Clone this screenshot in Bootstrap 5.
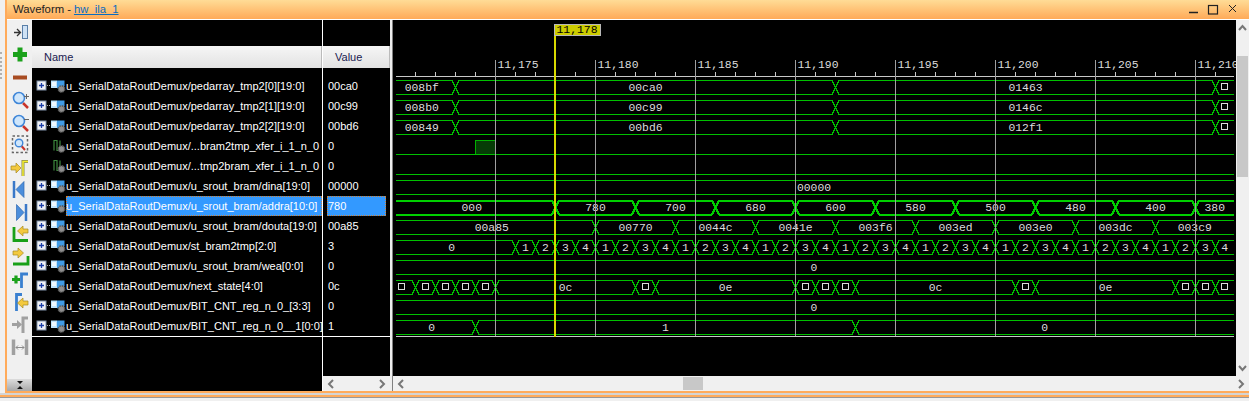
<html>
  <head>
    <link href="https://cdn.jsdelivr.net/npm/bootstrap@5.3.1/dist/css/bootstrap.min.css" rel="stylesheet" />
    <script src="https://cdn.jsdelivr.net/npm/bootstrap@5.3.1/dist/js/bootstrap.bundle.min.js"></script>
    <style>
      html, body { height: 401px; overflow: hidden; }
      body { background: #f0f0f0; font-family: "Liberation Sans", sans-serif; font-size: 11px; line-height: 1; }
      .top-part { height: 393px; }
      .grip-strip { width: 5px; }
      .grip-dots { width: 2px; height: 27px; margin-top: 52px; border-left: 2px dotted #b0b0b0; }
      .view-frame { width: 1244px; border-left: 2px solid #ffab5b; border-bottom: 2px solid #ffab5b; }
      .title-bar { height: 20px; background: linear-gradient(#ffdc96, #ffaa58); border-bottom: 1px solid #fff; padding-left: 6px; color: #222; font-size: 11.3px; }
      .title-bar a { color: #0a6cc0; margin-left: 3px; }
      .main-row { height: 371px; }
      .tool-col { width: 25px; background: #f0f0f0; padding-top: .75px; }
      .tool-col svg { display: block; width: 25px; height: 22.5px; }
      .tool-grip { height: 12.5px; background: linear-gradient(#dcdcdc, #a8a8a8); }
      .name-col { width: 290px; background: #000; border-right: 1px solid #fff; box-sizing: content-box; }
      .value-col { width: 67px; background: #000; }
      .col-head { height: 22px; margin-top: 26px; background: linear-gradient(#f6f6f6, #e2e2e2); color: #1a1a50; border-right: 1px solid #bbb; padding-left: 12px; }
      .sig-list { height: 261px; margin-top: 8px; border-bottom: 1px solid #fff; }
      .sig-row { height: 20px; color: #fff; white-space: nowrap; }
      .value-col .sig-row { padding-left: 4px; padding-right: 4px; }
      .sig-tree { width: 34px; padding-left: 4px; flex-shrink: 0; }
      .sig-tree svg { display: block; }
      .sig-text { height: 20px; flex-grow: 1; min-width: 0; }
      .value-text { height: 20px; flex-grow: 1; padding-left: 1px; }
      .is-selected { background: #3399ff; outline: 1px dotted #d08030; outline-offset: -1px; }
      .sash { width: 3px; background: #eeeeee; border-right: 1px solid #808080; }
      .wave-col { width: 857px; }
      .wave-box { height: 356px; }
      .wave-box > svg { display: block; background: #000; }
      .v-scroll { width: 13px; background: #f0f0f0; }
      .v-thumb { height: 121px; margin: 25px 1px auto; background: #c8c8c8; }
      .h-scroll { height: 15px; background: #f0f0f0; }
      .h-thumb { width: 20px; height: 13px; background: #c8c8c8; margin-left: 279px; }
      .wave-text { font-family: "Liberation Mono", monospace; font-size: 11.4px; fill: #dcdcdc; }
      .bottom-a { height: 2px; background: #d4d4d4; }
      .bottom-b { height: 2px; background: #ffab5b; }
      .bottom-c { height: 1px; background: #999; }
    </style>
  </head>
  <body class="m-0">
    <div class="top-part d-flex">
      <div class="grip-strip"><div class="grip-dots"></div></div>
      <div class="view-frame d-flex flex-column">
        <div class="title-bar d-flex align-items-center">
          <span>Waveform -</span><a href="#">hw_ila_1</a>
          <svg class="ms-auto" width="60" height="19" fill="none" stroke="#222">
            <path d="M0 12.5H9" stroke-width="1.5"/>
            <rect x="19.5" y="5.5" width="9" height="8.5" stroke-width="1.2"/>
            <path d="M40 5L47 12M47 5L40 12"/>
          </svg>
        </div>
        <div class="main-row d-flex">
          <div class="tool-col d-flex flex-column">
            <svg viewBox="0 0 25 22.5"><path d="M7 11.5H13M10 8l3.500 3.500L10 15" fill="none" stroke="#333" stroke-width="1.300"/><rect x="15.500" y="4.500" width="5" height="13" fill="#cfe2f5" stroke="#5a7fa8"/></svg>
            <svg viewBox="0 0 25 22.5"><path d="M6 11.500H20M13 4.500V18.500" stroke="#1ba11b" stroke-width="5"/></svg>
            <svg viewBox="0 0 25 22.5"><path d="M6 11.500H20" stroke="#a84c22" stroke-width="4"/></svg>
            <svg viewBox="0 0 25 22.5"><path d="M16 15L21 20" stroke="#c8342a" stroke-width="2.500"/><circle cx="12" cy="10" r="5.500" fill="#cfe6fb" stroke="#3f86d8" stroke-width="1.600"/><path d="M17 8.500H22M19.500 6V11" stroke="#666"/></svg>
            <svg viewBox="0 0 25 22.5"><path d="M16 15L21 20" stroke="#c8342a" stroke-width="2.500"/><circle cx="12" cy="10" r="5.500" fill="#cfe6fb" stroke="#3f86d8" stroke-width="1.600"/><path d="M17 8.500H22" stroke="#666"/></svg>
            <svg viewBox="0 0 25 22.5"><rect x="5.500" y="3" width="15" height="16.500" fill="none" stroke="#666" stroke-width="1.500" stroke-dasharray="2.500 2"/><path d="M14.500 13L18 17" stroke="#c8342a" stroke-width="2"/><circle cx="12" cy="10" r="3.800" fill="#cfe6fb" stroke="#3f86d8" stroke-width="1.400"/></svg>
            <svg viewBox="0 0 25 22.5"><path d="M4 10H9V7L14 12L9 17V14H4Z" fill="#f3c93f" stroke="#a88a20" stroke-width=".7"/><path d="M16 20V5.500H21" fill="none" stroke="#8a8a50" stroke-width="3"/><path d="M16 20V5.500H21" fill="none" stroke="#f4ee30" stroke-width="1.500"/></svg>
            <svg viewBox="0 0 25 22.5"><path d="M7 3V20" stroke="#3a78c8" stroke-width="2.500"/><path d="M9 11.500L17 3.500V19.500Z" fill="#4c8edc" stroke="#2f68b0" stroke-width=".7"/></svg>
            <svg viewBox="0 0 25 22.5"><path d="M19 3V20" stroke="#3a78c8" stroke-width="2.500"/><path d="M17 11.500L9.500 3.500V19.500Z" fill="#4c8edc" stroke="#2f68b0" stroke-width=".7"/></svg>
            <svg viewBox="0 0 25 22.5"><path d="M7 4V17.500H21" fill="none" stroke="#18a018" stroke-width="2.800"/><path d="M21 6H16V3L10.500 8L16 13V10H21Z" fill="#f3c93f" stroke="#a88a20" stroke-width=".7"/></svg>
            <svg viewBox="0 0 25 22.5"><path d="M6 18H21V10" fill="none" stroke="#18a018" stroke-width="2.800"/><path d="M6 5H11V2L16.500 7L11 12V9H6Z" fill="#f3c93f" stroke="#a88a20" stroke-width=".7"/></svg>
            <svg viewBox="0 0 25 22.5"><path d="M14.500 20V6H21" fill="none" stroke="#3a80d0" stroke-width="2.800"/><path d="M5 11.500H13M9 7.500V15.500" stroke="#1ba11b" stroke-width="3.200"/></svg>
            <svg viewBox="0 0 25 22.500"><path d="M9.500 20V3.500H15" fill="none" stroke="#3a80d0" stroke-width="2.800"/><path d="M21 10H16V7L10.500 12L16 17V14H21Z" fill="#f3c93f" stroke="#a88a20" stroke-width=".7"/></svg>
            <svg viewBox="0 0 25 22.500"><path d="M16 20V5H21" fill="none" stroke="#a0a0a0" stroke-width="3"/><path d="M5 10H10V7L15 11.500L10 16V13H5Z" fill="#a0a0a0"/></svg>
            <svg viewBox="0 0 25 22.500"><path d="M6.500 3.500V19M19.500 3.500V19" stroke="#a0a0a0" stroke-width="3.500"/><path d="M9 11.500H17M11 9.500L9 11.500L11 13.500M15 9.500L17 11.500L15 13.500" fill="none" stroke="#8a8a8a"/></svg>
            <div class="tool-grip mt-auto d-flex justify-content-center align-items-center">
              <svg viewBox="0 0 8 12" style="width:8px;height:12px"><path d="M1 2H7L4 5ZM1 10H7L4 7Z" fill="#111"/></svg>
            </div>
          </div>

          <div class="name-col d-flex flex-column">
            <div class="col-head d-flex align-items-center">Name</div>
            <div class="sig-list" id="nameList"></div>
          </div>

          <div class="value-col d-flex flex-column">
            <div class="col-head d-flex align-items-center">Value</div>
            <div class="sig-list" id="valueList"></div>
            <div class="h-scroll d-flex justify-content-between align-items-center mt-auto px-1">
              <svg width="7" height="10" fill="none" stroke="#777" stroke-width="2"><path d="M6 1L2 5L6 9"/></svg>
              <svg width="7" height="10" fill="none" stroke="#777" stroke-width="2"><path d="M1 1L5 5L1 9"/></svg>
            </div>
          </div>

          <div class="sash"></div>

          <div class="wave-col d-flex flex-column">
            <div class="wave-box d-flex">
              <svg id="wave" width="843" height="356" viewBox="393 20 843 356"></svg>
              <div class="v-scroll d-flex flex-column align-items-center">
                <svg class="mt-1 flex-shrink-0" width="9" height="7" fill="none" stroke="#777" stroke-width="2"><path d="M1 6L4.500 2L8 6"/></svg>
                <div class="v-thumb align-self-stretch"></div>
                <svg class="mb-1 flex-shrink-0" width="9" height="7" fill="none" stroke="#777" stroke-width="2"><path d="M1 1L4.500 5L8 1"/></svg>
              </div>
            </div>
            <div class="h-scroll d-flex align-items-center px-1">
              <svg width="7" height="10" fill="none" stroke="#777" stroke-width="2"><path d="M6 1L2 5L6 9"/></svg>
              <div class="h-thumb"></div>
              <svg class="ms-auto" width="7" height="10" fill="none" stroke="#777" stroke-width="2"><path d="M1 1L5 5L1 9"/></svg>
            </div>
          </div>
        </div>
      </div>
    </div>
    <div class="bottom-a"></div>
    <div class="bottom-b"></div>
    <div class="bottom-c"></div>

    <script>
        const P = 'u_SerialDataRoutDemux/';
        const signals = [
            [P + 'pedarray_tmp2[0][19:0]', '00ca0', 1],
            [P + 'pedarray_tmp2[1][19:0]', '00c99', 1],
            [P + 'pedarray_tmp2[2][19:0]', '00bd6', 1],
            [P + '...bram2tmp_xfer_i_1_n_0', '0', 0],
            [P + '...tmp2bram_xfer_i_1_n_0', '0', 0],
            [P + 'u_srout_bram/dina[19:0]', '00000', 1],
            [P + 'u_srout_bram/addra[10:0]', '780', 1],
            [P + 'u_srout_bram/douta[19:0]', '00a85', 1],
            [P + 'st_bram2tmp[2:0]', '3', 1],
            [P + 'u_srout_bram/wea[0:0]', '0', 1],
            [P + 'next_state[4:0]', '0c', 1],
            [P + 'BIT_CNT_reg_n_0_[3:3]', '0', 1],
            [P + 'BIT_CNT_reg_n_0__1[0:0]', '1', 1]
        ];

        const gear = `<circle cx="25.500" cy="10" r="3.200" fill="#8e8e8e" stroke="#555" stroke-width="1.400" stroke-dasharray="1.500 1"/>`;
        const busIcon = `<svg width="30" height="14" viewBox="0 0 30 14">
            <rect x="1" y="2" width="9" height="9" fill="#f0f2f6" stroke="#7f8fa8"/>
            <path d="M3 6.500H8M5.500 4V9" stroke="#1c3fa8" stroke-width="1.300"/>
            <path d="M11 6.500H15" stroke="#aaa" stroke-dasharray="1 1"/>
            <path d="M15 1.500H21V9H15Z" fill="#bfe3fb"/><path d="M21 1.500H28.500V7L24 11L21 9Z" fill="#3f9be6"/>
            <path d="M16 3H20V7H16Z" fill="#eef8ff"/>${gear}
          </svg>`;
        const bitIcon = `<svg width="30" height="14" viewBox="0 0 30 14">
            <path d="M18 11.500V1.500H21V11.500H24V1.500" fill="none" stroke="#3f8a3f" stroke-width="1.200"/>${gear}
          </svg>`;

        let nameHtml = '', valueHtml = '';
        signals.forEach((s, i) => {
            const sel = i === 6 ? 'is-selected' : '';
            nameHtml += `<div class="sig-row d-flex align-items-center">
                <div class="sig-tree">${s[2] ? busIcon : bitIcon}</div>
                <div class="sig-text d-flex align-items-center ${sel}">${s[0]}</div></div>`;
            valueHtml += `<div class="sig-row d-flex align-items-center">
                <div class="value-text d-flex align-items-center ${sel}">${s[1]}</div></div>`;
        });
        document.getElementById('nameList').innerHTML = nameHtml;
        document.getElementById('valueList').innerHTML = valueHtml;

        // waveform canvas: 20px per sample, 11,175 sits at x=495.5
        const GREEN = '#00c000', XL = 396, XR = 1234, HALF = 3.5;
        let wave = '';

        function line(d, color, w) {
            return `<path d="${d}" fill="none" stroke="${color}" stroke-width="${w}" shape-rendering="crispEdges"/>`;
        }
        function label(x, y, t) {
            return `<text x="${x}" y="${y}" text-anchor="middle" class="wave-text">${t}</text>`;
        }
        // cuts: x of each transition, vals: text per segment, null draws the little box
        function bus(c, cuts, vals, w) {
            const top = c - 6.5, bot = c + 7.5;
            const edge = [XL].concat(cuts, [XR]);
            let d = '', t = '';
            for (let i = 0; i < edge.length - 1; i++) {
                const a = i ? edge[i] + HALF : edge[i];
                const b = i < edge.length - 2 ? edge[i + 1] - HALF : edge[i + 1];
                d += `M${a} ${top}H${b}M${a} ${bot}H${b}`;
                if (i < edge.length - 2) {
                    d += `M${b} ${top}L${b + 2 * HALF} ${bot}M${b} ${bot}L${b + 2 * HALF} ${top}`;
                }
                const mid = cuts.length === 0 ? 814 : ((i ? edge[i] : 388) + edge[i + 1]) / 2;
                if (vals[i] === null) {
                    t += `<rect x="${Math.floor(mid) - 2.5}" y="${c - 3.5}" width="6" height="6" fill="none" stroke="#dcdcdc"/>`;
                } else {
                    t += label(mid, c + 4, vals[i]);
                }
            }
            return line(d, w > 1 ? '#00d000' : GREEN, w) + t;
        }

        let texts = '';
        texts += bus(87, [455.5, 835.5, 1215.5], ['008bf', '00ca0', '01463', null], 1);
        texts += bus(107, [455.5, 835.5, 1215.5], ['008b0', '00c99', '0146c', null], 1);
        texts += bus(127, [455.5, 835.5, 1215.5], ['00849', '00bd6', '012f1', null], 1);

        // two single bit rows
        wave += `<rect x="475.5" y="140.5" width="20" height="14" fill="#063c06" stroke="#00b000"/>`;
        wave += line(`M${XL} 154.5H${XR}M${XL} 174.5H${XR}`, GREEN, 1);

        texts += bus(187, [], ['00000'], 1);

        const addr = [];
        for (let x = 555.5; x < 1200; x += 80) addr.push(x);
        texts += bus(207, addr, ['000', '780', '700', '680', '600', '580', '500', '480', '400', '380'], 2);

        texts += bus(227, [595.5, 675.5, 755.5, 835.5, 915.5, 995.5, 1075.5, 1155.5],
            ['00a85', '00770', '0044c', '0041e', '003f6', '003ed', '003e0', '003dc', '003c9'], 1);

        const st = [], stVals = ['0'];
        let n = 1;
        for (let x = 515.5; x < 1225; x += 20) {
            st.push(x);
            stVals.push(String(n));
            n = n === 4 ? 1 : n + 1;
        }
        texts += bus(247, st, stVals, 1);
        texts += bus(267, [], ['0'], 1);
        texts += bus(287, [415.5, 435.5, 455.5, 475.5, 495.5, 635.5, 655.5, 795.5, 815.5, 835.5, 855.5, 1015.5, 1035.5, 1175.5, 1195.5, 1215.5],
            [null, null, null, null, null, '0c', null, '0e', null, null, null, '0c', null, '0e', null, null, null], 1);
        texts += bus(307, [], ['0'], 1);
        texts += bus(327, [475.5, 855.5], ['0', '1', '0'], 1);
        wave += texts;

        // ruler and grid
        let ticks = '', grid = '';
        for (let x = 415.5; x < 1230; x += 20) ticks += `M${x} 72V76`;
        wave += line(ticks, '#c8c8c8', 1);
        wave += line(`M${XL} 76.500H${XR}`, '#c8c8c8', 1);
        wave += line(`M${XL} 336.500H${XR}`, '#c8c8c8', 1);
        for (let i = 0; i < 8; i++) {
            const x = 495.5 + i * 100;
            grid += `M${x} 60V336`;
            wave += `<text x="${x + 2}" y="68" class="wave-text">11,${175 + i * 5}</text>`;
        }
        wave += line(grid, '#a0a0a0', 1);

        // cursor flag
        wave += line('M555 36V337', '#d8d800', 2);
        wave += `<rect x="554.500" y="24.500" width="46" height="11" fill="#cccc00" stroke="#b8b8b8"/>`;
        wave += `<text x="556.500" y="33" class="wave-text" style="fill:#000">11,178</text>`;

        document.getElementById('wave').innerHTML = wave;
    </script>
  </body>
</html>
